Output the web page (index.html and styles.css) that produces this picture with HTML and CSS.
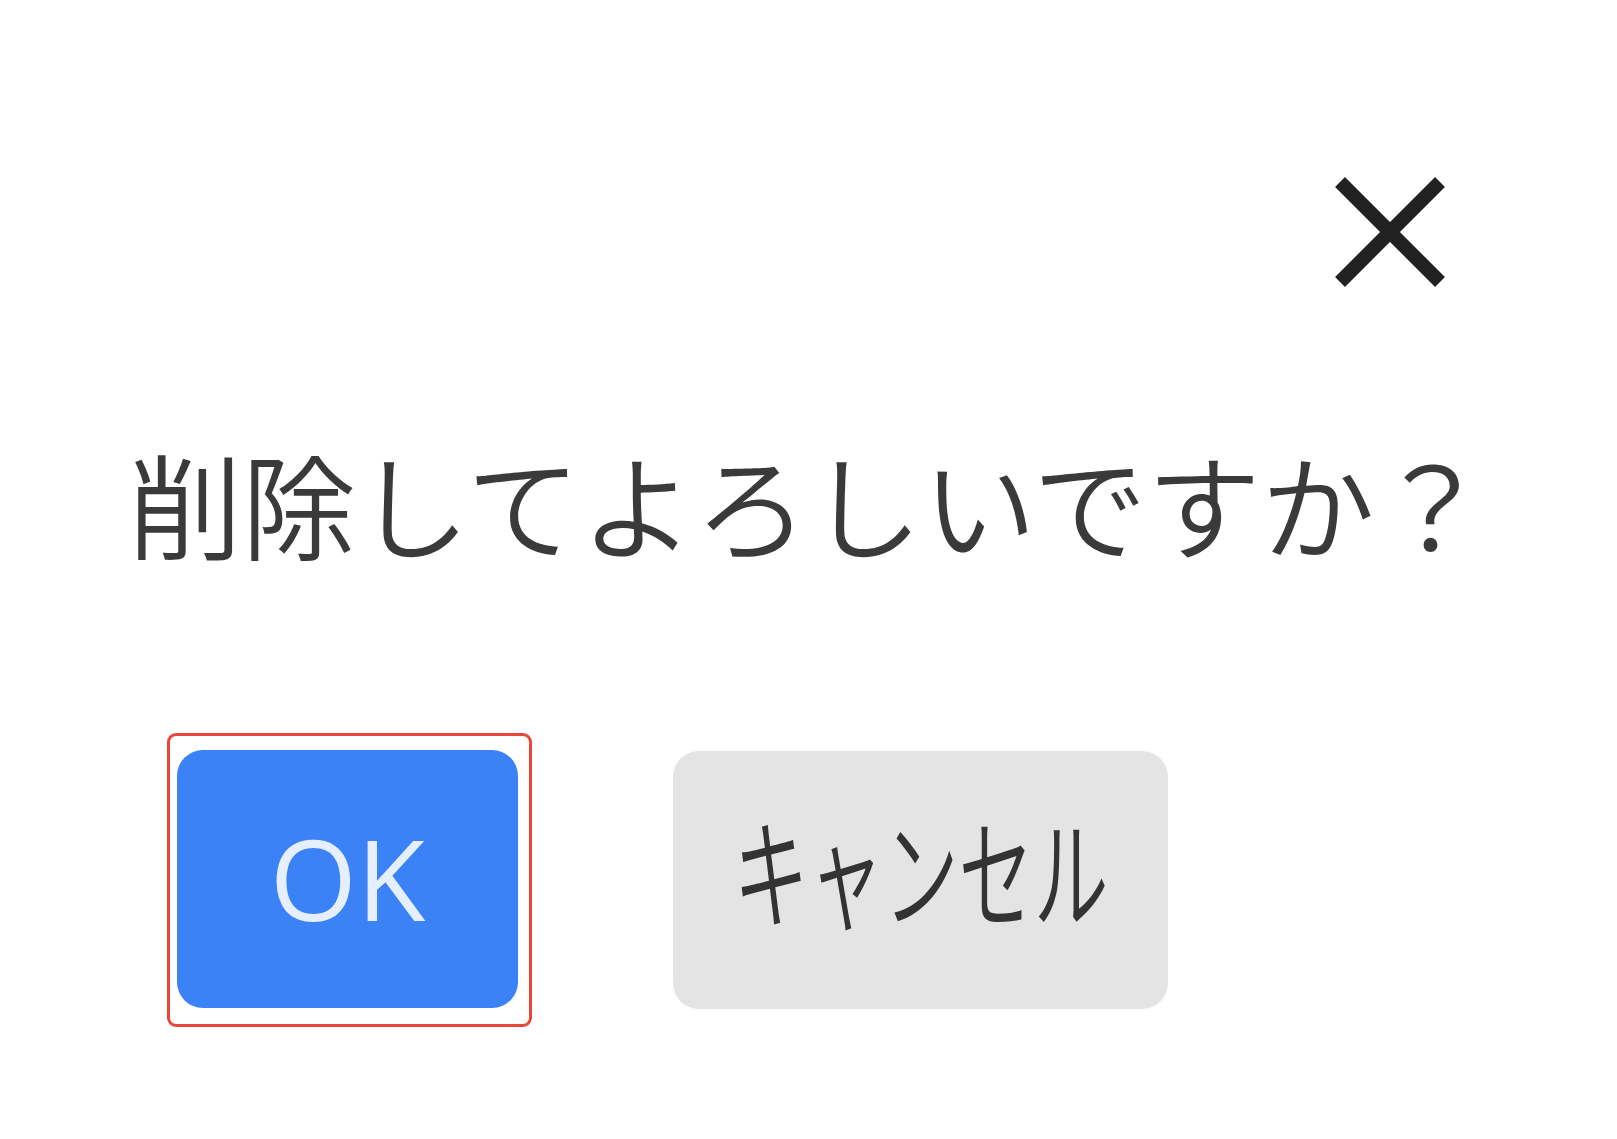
FILE: index.html
```html
<!DOCTYPE html>
<html>
<head>
  <meta charset="UTF-8" />
  <title>確認</title>
  <link rel="stylesheet" href="styles.css">
</head>
<body>
  <div class="dialog">
    <div class="dialog-head">
      <button class="close-btn" aria-label="閉じる">
        <svg width="114" height="114" viewBox="0 0 114 114">
          <line x1="7" y1="7" x2="107" y2="107" />
          <line x1="107" y1="7" x2="7" y2="107" />
        </svg>
      </button>
    </div>
    <p class="message">削除してよろしいですか？</p>
    <div class="actions">
      <span class="focus-ring">
        <button class="btn btn-ok">OK</button>
      </span>
      <button class="btn btn-cancel"><span class="label">キャンセル</span></button>
    </div>
  </div>
</body>
</html>
```

FILE: styles.css
```css
body {
  margin: 0;
  padding: 0;
  background-color: #fff;
  font-family: "Noto Sans CJK JP", "Noto Sans", sans-serif;
  color: #333;
}
.dialog {
  padding-top: 175px;
}
.dialog-head {
  display: flex;
  justify-content: flex-end;
  padding-right: 170px;
}
.close-btn {
  background: none;
  border: none;
  padding: 0;
  display: block;
  cursor: pointer;
}
.close-btn svg {
  display: block;
}
.close-btn line {
  stroke: #222;
  stroke-width: 14;
}
.message {
  margin: 156px 0 0;
  text-align: center;
  font-size: 114px;
  font-weight: 350;
  line-height: 1;
  color: #3a3a3a;
}
.actions {
  display: flex;
  align-items: center;
  gap: 141px;
  padding-left: 167px;
  margin-top: 174px;
}
.focus-ring {
  display: block;
  border: 3px solid #e8483a;
  border-radius: 9px;
  padding: 14px 11px 16px 7px;
}
.btn {
  display: flex;
  align-items: center;
  justify-content: center;
  height: 258px;
  border: none;
  border-radius: 26px;
  font-family: "Noto Sans CJK JP", "Noto Sans", sans-serif;
  padding: 0;
  white-space: nowrap;
  cursor: pointer;
}
.btn-ok {
  width: 341px;
  font-family: "Open Sans", "Noto Sans", sans-serif;
  font-size: 112px;
  padding-bottom: 4px;
  background-color: #3b82f6;
  color: #e6efff;
}
.btn-cancel {
  width: 495px;
  font-size: 120px;
  font-weight: 350;
  padding-bottom: 24px;
  background-color: #e4e4e4;
  color: #333;
}
.btn-cancel .label {
  flex-shrink: 0;
  transform: scaleX(0.625);
}
```
